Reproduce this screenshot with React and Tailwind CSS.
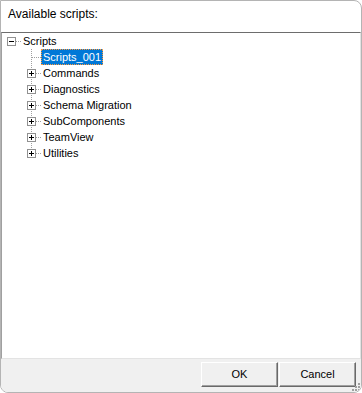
import React from "react";

const FONT = { fontFamily: '"Liberation Sans", Arial, sans-serif' };

const children = [
  { label: "Scripts_001", leaf: true, selected: true },
  { label: "Commands" },
  { label: "Diagnostics" },
  { label: "Schema Migration" },
  { label: "SubComponents" },
  { label: "TeamView" },
  { label: "Utilities" },
];

// --- expander box with dotted connectors ---
function Connector({ leaf, expanded, last, vertical }) {
  return (
    <svg width="19" height="16" className="shrink-0" shapeRendering="crispEdges">
      {vertical && (
        <line
          x1="9.5"
          y1="0"
          x2="9.5"
          y2={last ? 8 : 16}
          stroke="#a0a0a0"
          strokeDasharray="1 1"
        />
      )}
      <line
        x1={leaf ? 10 : 14}
        y1="8.5"
        x2="19"
        y2="8.5"
        stroke="#a0a0a0"
        strokeDasharray="1 1"
      />
      {!leaf && (
        <g>
          <rect x="5.5" y="4.5" width="8" height="8" fill="#fff" stroke="#919191" />
          <line x1="7" y1="8.5" x2="12" y2="8.5" stroke="#000" />
          {!expanded && <line x1="9.5" y1="6" x2="9.5" y2="11" stroke="#000" />}
        </g>
      )}
    </svg>
  );
}

function Label({ text, selected }) {
  return (
    <span
      className={`h-4 px-[2px] flex items-center text-[11px] leading-none whitespace-nowrap ${
        selected
          ? "bg-[#0078d7] text-white outline outline-1 outline-dotted outline-[#ff9a3c] -outline-offset-1"
          : "text-black"
      }`}
    >
      {text}
    </span>
  );
}

function TreeView() {
  return (
    <div className="flex-1 border-t border-l border-t-[#6d6d6d] border-l-[#a0a0a0] border-r border-b border-r-[#e3e3e3] border-b-[#e3e3e3] bg-white">
      <div className="flex h-4 items-center">
        <Connector expanded />
        <Label text="Scripts" />
      </div>
      {children.map((c, i) => (
        <div key={c.label} className="flex h-4 items-center pl-[20px]">
          <Connector leaf={c.leaf} vertical last={i === children.length - 1} />
          <Label text={c.label} selected={c.selected} />
        </div>
      ))}
    </div>
  );
}

function Button({ children }) {
  return (
    <button
      type="button"
      className="w-[77px] h-[25px] bg-[#f0f0f0] border border-t-white border-l-white border-r-[#696969] border-b-[#696969] shadow-[inset_-1px_-1px_0_#a0a0a0] text-[11px] text-black flex items-center justify-center"
    >
      {children}
    </button>
  );
}

export default function App() {
  return (
    <div
      style={FONT}
      className="w-[362px] h-[393px] bg-white flex flex-col border border-[#b4b4b4] rounded-tr-[8px] rounded-b-[8px] overflow-hidden"
    >
      <div className="h-[31px] pl-[7px] flex items-center text-[12px] text-black pb-[6px] pt-[1px]">
        Available scripts:
      </div>
      <TreeView />
      <div className="h-[33px] bg-[#f0f0f0] flex items-start justify-end gap-[1px] pt-[3px] pr-[5px] relative">
        <Button>OK</Button>
        <Button>Cancel</Button>
        <svg width="12" height="12" className="absolute right-0 bottom-0" shapeRendering="crispEdges">
          {[
            [9, 3], [6, 6], [9, 6], [3, 9], [6, 9], [9, 9],
          ].map(([x, y]) => (
            <rect key={`${x}-${y}`} x={x} y={y} width="2" height="2" fill="#a0a0a0" />
          ))}
        </svg>
      </div>
    </div>
  );
}
